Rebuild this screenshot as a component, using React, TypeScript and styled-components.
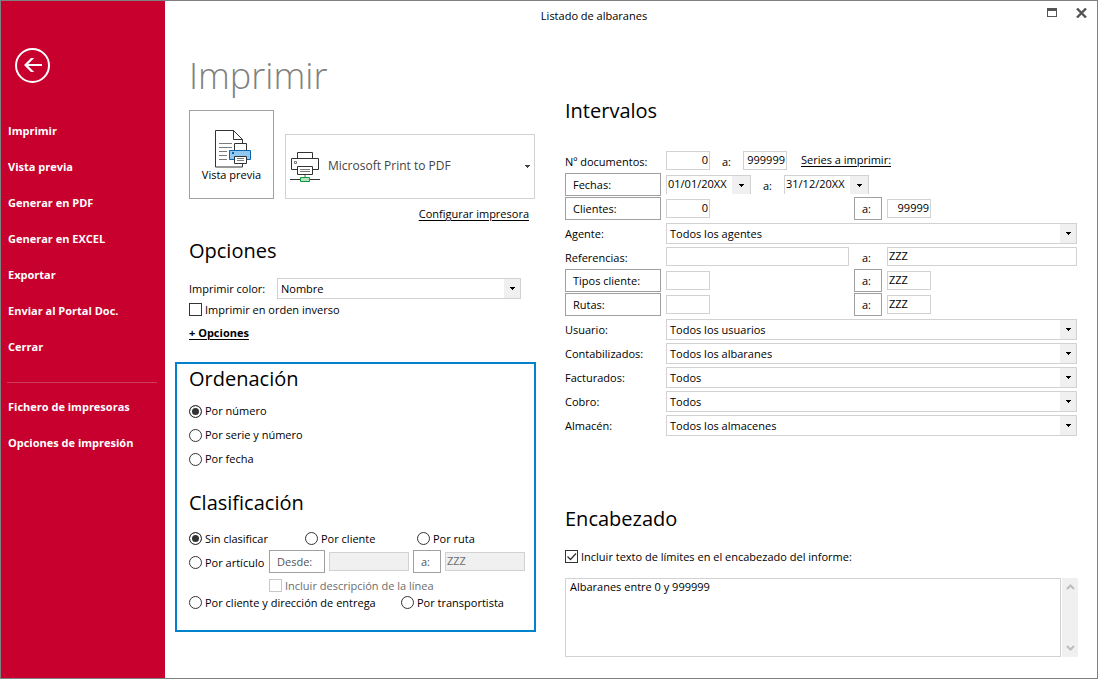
import React, { useId } from 'react';
import styled, { createGlobalStyle, css } from 'styled-components';

const ink = '#000000';
const line = '#d2d2d2';
const strongLine = '#a0a0a0';
const face = '#f0f0f0';

const GlobalStyle = createGlobalStyle`
  *, *::before, *::after { box-sizing: border-box; }
  body {
    margin: 0;
    background: #ffffff;
    color: ${ink};
    font-family: "Open Sans", "Noto Sans", sans-serif;
    font-size: 11px;
    line-height: 16px;
  }
  button, input, select, textarea {
    margin: 0;
    font: inherit;
    color: inherit;
  }
  svg { display: block; }
`;

const Window = styled.div`
  display: grid;
  grid-template-columns: 164px minmax(0, 1fr);
  min-height: 100vh;
  border: 1px solid #808080;
`;

/* ---------- Sidebar ---------- */

const Sidebar = styled.aside`
  padding-top: 47px;
  background: #c8002d;
  color: #ffffff;
`;

const BackButton = styled.button`
  display: block;
  margin-left: 14px;
  padding: 0;
  border: 0;
  background: none;
`;

const Menu = styled.nav`
  display: flex;
  flex-direction: column;
  margin-top: 30px;
`;

const MenuLink = styled.a`
  padding-left: 7px;
  color: #ffffff;
  font-weight: 700;
  line-height: 36px;
  text-decoration: none;
`;

const MenuDivider = styled.hr`
  width: 150px;
  height: 1px;
  margin: 17px 0 6px 6px;
  border: 0;
  background: #d23c5c;
`;

/* ---------- Frame ---------- */

const Main = styled.main`
  display: flex;
  flex-direction: column;
  min-width: 0;
`;

const TitleBar = styled.header`
  display: flex;
  align-items: center;
  height: 30px;
`;

const WindowTitle = styled.div`
  flex: 1;
  text-align: center;
`;

const WindowControls = styled.div`
  display: flex;
  justify-content: flex-end;
  gap: 19px;
  width: 74px;
  padding: 0 10px 6px 0;
`;

const WindowButton = styled.button`
  padding: 0;
  border: 0;
  background: none;
`;

const Columns = styled.div`
  display: grid;
  grid-template-columns: minmax(0, 361fr) minmax(0, 512fr);
  column-gap: 29px;
  padding: 0 20px 21px 10px;
`;

const PageTitle = styled.h1`
  margin: 21px 0 10px;
  color: #808080;
  font-size: 36px;
  font-weight: 350;
  line-height: 48px;
`;

const SectionTitle = styled.h2<{ $top?: number }>`
  margin: ${(p) => p.$top ?? 0}px 0 0;
  font-size: 20px;
  font-weight: 400;
  line-height: 30px;
`;

const PrintPanel = styled.section`
  padding: 0 0 0 14px;
`;

/* ---------- Controls ---------- */

const TextLink = styled.a<{ $bold?: boolean }>`
  color: ${ink};
  font-weight: ${(p) => (p.$bold ? 700 : 400)};
  text-decoration: underline;
  text-underline-offset: 2px;
`;

const BoxButton = styled.button`
  height: 23px;
  padding: 0 7px;
  border: 1px solid ${strongLine};
  background: #ffffff;
  text-align: left;
  white-space: nowrap;

  &:disabled { color: #555555; }
`;

const Field = styled.input<{ $short?: boolean; $right?: boolean }>`
  width: ${(p) => (p.$short ? '44px' : '100%')};
  min-width: 0;
  height: 19px;
  margin-top: 2px;
  padding: 0 1px 2px;
  border: 1px solid ${line};
  border-radius: 0;
  background: #ffffff;
  text-align: ${(p) => (p.$right ? 'right' : 'left')};

  &:disabled {
    background: ${face};
    color: #6d6d6d;
  }
`;

const SelectFrame = styled.div<{ $date?: boolean }>`
  display: grid;
  grid-template-columns: minmax(0, 1fr) ${(p) => (p.$date ? 18 : 16)}px;
  width: ${(p) => (p.$date ? '85px' : '100%')};
  height: ${(p) => (p.$date ? 19 : 21)}px;
  border: 1px solid ${line};

  select {
    grid-area: 1 / 1 / 2 / 3;
    width: 100%;
    padding: ${(p) => (p.$date ? '0 0 2px 1px' : '0 20px 0 3px')};
    border: 0;
    border-radius: 0;
    background: #ffffff;
    appearance: none;
  }
`;

const SelectArrow = styled.span`
  display: grid;
  grid-area: 1 / 2;
  place-items: center;
  background: ${face};
  pointer-events: none;
`;

const markStyle = css`
  flex: none;
  width: 13px;
  height: 13px;
  border: 1px solid #333333;
  background: #ffffff;
  appearance: none;
`;

const RadioMark = styled.input`
  ${markStyle}
  border-radius: 50%;

  &:checked {
    background: #333333;
    box-shadow: inset 0 0 0 2px #ffffff;
  }
`;

const CheckMark = styled.span`
  display: grid;

  input {
    ${markStyle}
    grid-area: 1 / 1;
  }
  input:disabled { border-color: #c8c8c8; }
  svg {
    grid-area: 1 / 1;
    pointer-events: none;
  }
`;

const ChoiceLabel = styled.label<{ $height?: number; $muted?: boolean }>`
  display: flex;
  align-items: center;
  gap: 3px;
  height: ${(p) => p.$height ?? 15}px;
  color: ${(p) => (p.$muted ? '#6d6d6d' : ink)};
  white-space: nowrap;
`;

/* ---------- Printer ---------- */

const PrinterRow = styled.div`
  display: flex;
  align-items: flex-end;
  gap: 11px;
  padding-right: 1px;
`;

const PreviewButton = styled.button`
  display: flex;
  flex: none;
  flex-direction: column;
  align-items: center;
  width: 85px;
  height: 89px;
  padding: 18px 0 0;
  border: 1px solid ${strongLine};
  background: #ffffff;
  line-height: 14px;
`;

const PrinterPicker = styled.div`
  display: grid;
  flex: 1;
  grid-template-columns: 42px minmax(0, 1fr) 9px;
  align-items: center;
  height: 65px;
  border: 1px solid ${line};

  svg {
    z-index: 1;
    grid-row: 1;
    pointer-events: none;
  }
  svg:first-child { grid-column: 1; margin-left: 3px; }
  svg:last-child { grid-column: 3; }
  select {
    grid-area: 1 / 1 / 2 / 4;
    width: 100%;
    height: 100%;
    padding: 0 16px 2px 42px;
    border: 0;
    background: #ffffff;
    color: #444444;
    font-size: 12px;
    appearance: none;
  }
`;

const ConfigureRow = styled.div`
  margin-top: 7px;
  padding-right: 7px;
  text-align: right;
`;

const ColorRow = styled.div`
  display: grid;
  grid-template-columns: 88px minmax(0, 1fr);
  align-items: center;
  margin: 12px 15px 3px 0;
`;

const MoreOptions = styled.div`
  margin-top: 8px;
`;

/* ---------- Highlighted group ---------- */

const SortPanel = styled.section`
  margin-top: 21px;
  padding: 0 9px 20px 12px;
  border: 2px solid #0083ca;
`;

const RadioList = styled.div`
  margin: 5px 0 17px;
`;

const ThreeChoices = styled.div`
  display: grid;
  grid-template-columns: 116px 112px auto;
  margin-top: 9px;
`;

const ArticleRow = styled.div`
  display: grid;
  grid-template-columns: 76px 56px minmax(0, 1fr) 28px minmax(0, 1fr);
  column-gap: 4px;
  align-items: start;
`;

const DescriptionRow = styled.div`
  margin: 3px 0 2px;
  padding-left: 80px;
`;

const TwoChoices = styled.div`
  display: grid;
  grid-template-columns: 212px auto;
`;

/* ---------- Intervals ---------- */

const IntervalList = styled.div`
  margin-top: 23px;
`;

const IntervalRow = styled.div<{ $kind: 'inline' | 'range' | 'wide' }>`
  display: grid;
  grid-template-columns: ${(p) =>
    p.$kind === 'range' ? '96px minmax(0, 183fr) 28px minmax(0, 190fr)' : '96px minmax(0, 1fr)'};
  column-gap: 5px;
  align-items: start;
  height: 24px;

  ${SelectFrame} { margin-top: 2px; }
`;

const InlineFields = styled.div`
  display: flex;
  align-items: flex-start;
`;

const RowLabel = styled.label`
  line-height: 26px;
  white-space: nowrap;
`;

const Between = styled.span<{ $wide?: boolean }>`
  flex: none;
  width: ${(p) => (p.$wide ? '33px' : 'auto')};
  padding-left: ${(p) => (p.$wide ? 12 : 8)}px;
  line-height: 26px;
`;

const SeriesLink = styled(TextLink)`
  margin-left: 14px;
  line-height: 22px;
`;

/* ---------- Header text ---------- */

const HeaderToggle = styled.div`
  margin: 15px 0 14px;
`;

const HeaderEditor = styled.div`
  display: grid;
  grid-template-columns: minmax(0, 1fr) 16px;
  column-gap: 1px;
  height: 79px;
  margin-right: -1px;
`;

const HeaderText = styled.textarea`
  display: block;
  width: 100%;
  height: 100%;
  padding: 0 4px;
  border: 1px solid ${line};
  border-radius: 0;
  resize: none;
`;

const ScrollBar = styled.div`
  display: flex;
  flex-direction: column;
  justify-content: space-between;
  background: ${face};

  button {
    display: grid;
    place-items: center;
    height: 18px;
    padding: 0;
    border: 0;
    background: none;
  }
`;

/* ---------- Drawings ---------- */

const ArrowGlyph = ({ color = '#000000' }: { color?: string }) => (
  <svg width="5" height="3" viewBox="0 0 5 3" shapeRendering="crispEdges" aria-hidden="true">
    <path d="M0 0h5v1h-1v1h-1v1h-1v-1h-1v-1h-1z" fill={color} />
  </svg>
);

const BackGlyph = () => (
  <svg width="35" height="35" viewBox="0 0 35 35" fill="none" aria-hidden="true">
    <circle cx="17.5" cy="17.5" r="16.5" stroke="#ffffff" strokeWidth="2" />
    <path
      d="M9 17l7-7h3.200l-6 6H27v2H13.200l6 6H16z"
      fill="#ffffff"
    />
  </svg>
);

const PreviewGlyph = () => (
  <svg width="39" height="39" viewBox="-2 0 39 39" fill="none" aria-hidden="true">
    <path d="M1.500 1.500h18l9 9v27.500h-27z" fill="#ffffff" stroke="#333333" />
    <path d="M19.500 1.500v9h9" stroke="#333333" />
    <path d="M5 14.500h13M5 18.500h13M5 22.500h8M5 26.500h8M5 30.500h8" stroke="#7a7a7a" />
    <path d="M20.500 21.500v-7h12v7" fill="#ffffff" stroke="#333333" />
    <path d="M15.500 21.500h21v9h-21z" fill="#92c8f0" stroke="#0a64ae" />
    <path d="M18 23h2v2h-2z" fill="#0a64ae" />
    <path d="M20.500 27.500h12v7h-12z" fill="#ffffff" stroke="#333333" />
    <path d="M23 29.500h7M23 31.500h7" stroke="#7a7a7a" />
  </svg>
);

const PrinterGlyph = () => (
  <svg width="33" height="32" viewBox="0 0 33 32" fill="none" aria-hidden="true">
    <path d="M8.500 7.500v-6h15v6" stroke="#333333" />
    <path d="M2.500 7.500h27v11h-27z" fill="#ffffff" stroke="#333333" />
    <path d="M5.500 10.500h2v2h-2z" stroke="#7a7a7a" />
    <path d="M8.500 15.500h15v8h-15z" fill="#ffffff" stroke="#333333" />
    <path d="M11 18.500h10M11 20.500h10" stroke="#7a7a7a" />
    <path d="M16 24v2" stroke="#b0b0b0" strokeWidth="2" />
    <path d="M1 28.500h30" stroke="#333333" />
    <path d="M11.500 26.500h9v4h-9z" fill="#b5e3c0" stroke="#109a3e" />
  </svg>
);

/* ---------- Composite pieces ---------- */

type SelectProps = { label?: string; id?: string; value: string; date?: boolean };

const DropDown = ({ label, id, value, date }: SelectProps) => (
  <SelectFrame $date={date}>
    <select id={id} aria-label={label} defaultValue={value}>
      <option>{value}</option>
    </select>
    <SelectArrow>
      <ArrowGlyph />
    </SelectArrow>
  </SelectFrame>
);

const Radio = (p: { name: string; text: string; checked?: boolean; height?: number }) => (
  <ChoiceLabel $height={p.height}>
    <RadioMark type="radio" name={p.name} defaultChecked={p.checked} />
    {p.text}
  </ChoiceLabel>
);

const Check = (p: { text: string; checked?: boolean; disabled?: boolean }) => {
  const [on, setOn] = React.useState(Boolean(p.checked));
  return (
    <ChoiceLabel $muted={p.disabled}>
      <CheckMark>
        <input
          type="checkbox"
          checked={on}
          disabled={p.disabled}
          onChange={(e) => setOn(e.target.checked)}
        />
        {on && (
          <svg width="13" height="13" viewBox="0 0 13 13" fill="none" aria-hidden="true">
            <path d="M2.500 6.500l3 3 5.500-6" stroke="#333333" strokeWidth="1.300" />
          </svg>
        )}
      </CheckMark>
      {p.text}
    </ChoiceLabel>
  );
};

const SelectRow = ({ label, value }: { label: string; value: string }) => {
  const id = useId();
  return (
    <IntervalRow $kind="wide">
      <RowLabel htmlFor={id}>{label}</RowLabel>
      <DropDown id={id} value={value} />
    </IntervalRow>
  );
};

type RangeProps = { label: string; from?: string; to: string; numeric?: boolean };

const RangeRow = ({ label, from = '', to, numeric }: RangeProps) => (
  <IntervalRow $kind="range">
    <BoxButton type="button">{label}</BoxButton>
    <Field $short $right={numeric} aria-label={`${label} desde`} defaultValue={from} />
    <BoxButton type="button">a:</BoxButton>
    <Field $short $right={numeric} aria-label={`${label} hasta`} defaultValue={to} />
  </IntervalRow>
);

const menuItems = [
  'Imprimir',
  'Vista previa',
  'Generar en PDF',
  'Generar en EXCEL',
  'Exportar',
  'Enviar al Portal Doc.',
  'Cerrar',
];
const setupItems = ['Fichero de impresoras', 'Opciones de impresión'];

const filters = [
  ['Usuario:', 'Todos los usuarios'],
  ['Contabilizados:', 'Todos los albaranes'],
  ['Facturados:', 'Todos'],
  ['Cobro:', 'Todos'],
  ['Almacén:', 'Todos los almacenes'],
];

export default function App() {
  return (
    <>
      <GlobalStyle />
      <Window>
        <Sidebar>
          <BackButton type="button" aria-label="Volver">
            <BackGlyph />
          </BackButton>
          <Menu>
            {menuItems.map((item) => (
              <MenuLink key={item} href="#">{item}</MenuLink>
            ))}
            <MenuDivider />
            {setupItems.map((item) => (
              <MenuLink key={item} href="#">{item}</MenuLink>
            ))}
          </Menu>
        </Sidebar>

        <Main>
          <TitleBar>
            <WindowTitle>Listado de albaranes</WindowTitle>
            <WindowControls>
              <WindowButton type="button" aria-label="Maximizar">
                <svg width="10" height="10" viewBox="0 0 10 10" shapeRendering="crispEdges">
                  <path d="M0 0h10v9H0zM1 3v5h8V3z" fill="#555555" fillRule="evenodd" />
                </svg>
              </WindowButton>
              <WindowButton type="button" aria-label="Cerrar ventana">
                <svg width="11" height="10" viewBox="0 0 11 10">
                  <path d="M1 .500l9 9M10 .500l-9 9" stroke="#555555" strokeWidth="2.400" />
                </svg>
              </WindowButton>
            </WindowControls>
          </TitleBar>

          <Columns>
            <div>
              <PrintPanel>
                <PageTitle>Imprimir</PageTitle>
                <PrinterRow>
                  <PreviewButton type="button">
                    <PreviewGlyph />
                    Vista previa
                  </PreviewButton>
                  <PrinterPicker>
                    <PrinterGlyph />
                    <select aria-label="Impresora">
                      <option>Microsoft Print to PDF</option>
                    </select>
                    <ArrowGlyph color="#444444" />
                  </PrinterPicker>
                </PrinterRow>
                <ConfigureRow>
                  <TextLink href="#">Configurar impresora</TextLink>
                </ConfigureRow>

                <SectionTitle $top={14}>Opciones</SectionTitle>
                <ColorRow>
                  <label htmlFor="print-color">Imprimir color:</label>
                  <DropDown id="print-color" value="Nombre" />
                </ColorRow>
                <Check text="Imprimir en orden inverso" />
                <MoreOptions>
                  <TextLink href="#" $bold>+ Opciones</TextLink>
                </MoreOptions>
              </PrintPanel>

              <SortPanel>
                <SectionTitle>Ordenación</SectionTitle>
                <RadioList>
                  <Radio name="order" text="Por número" height={24} checked />
                  <Radio name="order" text="Por serie y número" height={24} />
                  <Radio name="order" text="Por fecha" height={24} />
                </RadioList>

                <SectionTitle>Clasificación</SectionTitle>
                <ThreeChoices>
                  <Radio name="group" text="Sin clasificar" height={23} checked />
                  <Radio name="group" text="Por cliente" height={23} />
                  <Radio name="group" text="Por ruta" height={23} />
                </ThreeChoices>
                <ArticleRow>
                  <Radio name="group" text="Por artículo" height={25} />
                  <BoxButton type="button" disabled>Desde:</BoxButton>
                  <Field disabled aria-label="Artículo desde" />
                  <BoxButton type="button" disabled>a:</BoxButton>
                  <Field disabled aria-label="Artículo hasta" defaultValue="ZZZ" />
                </ArticleRow>
                <DescriptionRow>
                  <Check text="Incluir descripción de la línea" disabled />
                </DescriptionRow>
                <TwoChoices>
                  <Radio name="group" text="Por cliente y dirección de entrega" />
                  <Radio name="group" text="Por transportista" />
                </TwoChoices>
              </SortPanel>
            </div>

            <section>
              <SectionTitle $top={65}>Intervalos</SectionTitle>
              <IntervalList>
                <IntervalRow $kind="inline">
                  <RowLabel htmlFor="doc-from">Nº documentos:</RowLabel>
                  <InlineFields>
                    <Field id="doc-from" $short $right defaultValue="0" />
                    <Between $wide>a:</Between>
                    <Field $short $right aria-label="Documento hasta" defaultValue="999999" />
                    <SeriesLink href="#">Series a imprimir:</SeriesLink>
                  </InlineFields>
                </IntervalRow>
                <IntervalRow $kind="inline">
                  <BoxButton type="button">Fechas:</BoxButton>
                  <InlineFields>
                    <DropDown date label="Fecha desde" value="01/01/20XX" />
                    <Between $wide>a:</Between>
                    <DropDown date label="Fecha hasta" value="31/12/20XX" />
                  </InlineFields>
                </IntervalRow>
                <RangeRow label="Clientes:" from="0" to="99999" numeric />
                <SelectRow label="Agente:" value="Todos los agentes" />
                <IntervalRow $kind="range">
                  <RowLabel htmlFor="ref-from">Referencias:</RowLabel>
                  <Field id="ref-from" />
                  <Between>a:</Between>
                  <Field aria-label="Referencia hasta" defaultValue="ZZZ" />
                </IntervalRow>
                <RangeRow label="Tipos cliente:" to="ZZZ" />
                <RangeRow label="Rutas:" to="ZZZ" />
                {filters.map(([label, value]) => (
                  <SelectRow key={label} label={label} value={value} />
                ))}
              </IntervalList>

              <SectionTitle $top={67}>Encabezado</SectionTitle>
              <HeaderToggle>
                <Check text="Incluir texto de límites en el encabezado del informe:" checked />
              </HeaderToggle>
              <HeaderEditor>
                <HeaderText aria-label="Texto del encabezado" defaultValue="Albaranes entre 0 y 999999" />
                <ScrollBar>
                  <button type="button" aria-label="Subir">
                    <svg width="9" height="6" viewBox="0 0 9 6" fill="none">
                      <path d="M1 5l3.500-3.500L8 5" stroke="#bdbdbd" strokeWidth="2" />
                    </svg>
                  </button>
                  <button type="button" aria-label="Bajar">
                    <svg width="9" height="6" viewBox="0 0 9 6" fill="none">
                      <path d="M1 1l3.500 3.500L8 1" stroke="#bdbdbd" strokeWidth="2" />
                    </svg>
                  </button>
                </ScrollBar>
              </HeaderEditor>
            </section>
          </Columns>
        </Main>
      </Window>
    </>
  );
}
